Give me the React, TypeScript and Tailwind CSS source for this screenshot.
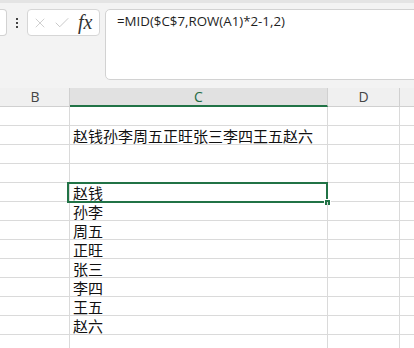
import { X, Check } from "lucide-react";

const rows = [
  "",
  "赵钱孙李周五正旺张三李四王五赵六",
  "",
  "",
  "赵钱",
  "孙李",
  "周五",
  "正旺",
  "张三",
  "李四",
  "王五",
  "赵六",
  "",
];

const cjk = { fontFamily: '"Noto Sans CJK SC", "Liberation Sans", sans-serif' };

const App = () => {
  return (
    <div className="w-[414px] h-[348px] overflow-hidden bg-white relative">
      {/* formula bar area */}
      <div className="h-[88px] bg-[#f3f3f3] border-t-[3px] border-[#e4e4e4] flex items-start pt-[6px]">
        <div className="w-[7px] h-[27px] bg-white border-y border-r border-[#d2d2d2] rounded-r-[4px] shrink-0" />
        <div className="w-[20px] h-[27px] flex flex-col items-center justify-center gap-[2px] shrink-0">
          <span className="w-[2px] h-[2px] bg-[#444]" />
          <span className="w-[2px] h-[2px] bg-[#444]" />
          <span className="w-[2px] h-[2px] bg-[#444]" />
        </div>
        <div className="w-[73px] h-[27px] bg-white border border-[#d6d6d6] rounded-[4px] flex items-center pl-[4px] shrink-0">
          <X size={16} strokeWidth={1.1} className="text-[#bdbdbd]" />
          <Check size={18} strokeWidth={1.1} className="text-[#bdbdbd] ml-[5px]" />
          <span
            className="ml-[7px] text-[20px] italic text-[#333] leading-none -mt-[2px]"
            style={{ fontFamily: '"Liberation Serif", serif' }}
          >
            fx
          </span>
        </div>
        <div
          className="ml-[5px] w-[320px] h-[71px] bg-white border border-[#d2d2d2] rounded-l-[5px] pl-[11px] pt-[2px] text-[13.3px] text-[#1f1f1f] shrink-0"
          style={{ fontFamily: '"Open Sans", "Liberation Sans", sans-serif' }}
        >
          =MID($C$7,ROW(A1)*2-1,2)
        </div>
      </div>

      {/* column headers */}
      <div
        className="flex h-[19px] text-[14px] text-[#444]"
        style={{ fontFamily: '"Open Sans", "Liberation Sans", sans-serif' }}
      >
        <div className="w-[70px] shrink-0 bg-[#f0f0f0] border-r border-b border-[#d0d0d0] flex items-center justify-center pl-[1px] leading-none">
          B
        </div>
        <div className="w-[258px] shrink-0 bg-[#e1e1e1] border-r border-[#d0d0d0] border-b-2 border-b-[#217346] flex items-center justify-center text-[#1e6b43] leading-none">
          C
        </div>
        <div className="w-[72px] shrink-0 bg-[#f0f0f0] border-r border-b border-[#d0d0d0] flex items-center justify-center leading-none">
          D
        </div>
        <div className="flex-1 bg-[#f0f0f0] border-b border-[#d0d0d0]" />
      </div>

      {/* cells */}
      {rows.map((text, i) => (
        <div key={i} className="flex h-[19px]">
          <div className="w-[70px] shrink-0 border-r border-b border-[#dadada]" />
          <div
            className="w-[258px] shrink-0 border-r border-b border-[#dadada] pl-[3px] text-[15px] leading-[19px] text-[#111] relative"
            style={cjk}
          >
            {text}
            {i === 4 && (
              <div className="absolute left-[-3px] top-[-1px] w-[261px] h-[21px] border-2 border-[#217346]">
                <div className="absolute right-[-4px] bottom-[-4px] w-[5px] h-[5px] bg-[#217346] outline outline-1 outline-white" />
              </div>
            )}
          </div>
          <div className="w-[72px] shrink-0 border-r border-b border-[#dadada]" />
          <div className="flex-1 border-b border-[#dadada]" />
        </div>
      ))}
    </div>
  );
};

export default App;
